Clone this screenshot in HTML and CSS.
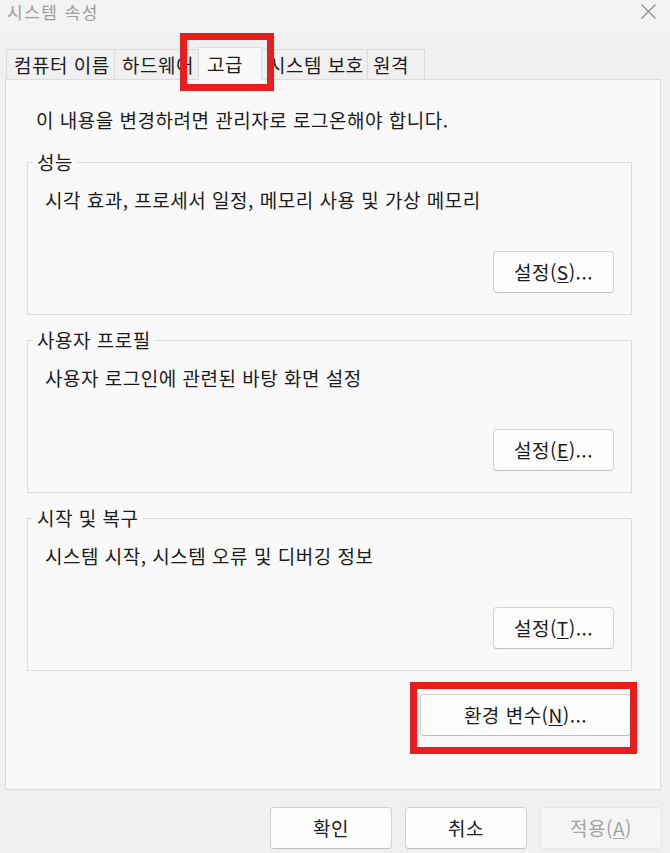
FILE: index.html
```html
<!DOCTYPE html>
<html lang="ko">
<head>
<meta charset="utf-8">
<title>시스템 속성</title>
<link rel="stylesheet" href="styles.css">
</head>
<body>
<div class="window">
  <div class="titlebar">
    <span class="title">시스템 속성</span>
    <svg class="close" width="15" height="15" viewBox="0 0 15 15"><path d="M0.5 0.5 L14.5 14.5 M14.5 0.5 L0.5 14.5" stroke="#8c8c8c" stroke-width="1.2" fill="none"/></svg>
  </div>
  <div class="tabs">
    <div class="tab t1">컴퓨터 이름</div>
    <div class="tab t2">하드웨어</div>
    <div class="tab t3 selected">고급</div>
    <div class="tab t4">시스템 보호</div>
    <div class="tab t5">원격</div>
  </div>
  <div class="panel">
    <p class="notice">이 내용을 변경하려면 관리자로 로그온해야 합니다.</p>
    <fieldset class="group">
      <legend>성능</legend>
      <p class="desc">시각 효과, 프로세서 일정, 메모리 사용 및 가상 메모리</p>
      <div class="row"><button class="btn small">설정(<u>S</u>)...</button></div>
    </fieldset>
    <fieldset class="group">
      <legend>사용자 프로필</legend>
      <p class="desc">사용자 로그인에 관련된 바탕 화면 설정</p>
      <div class="row"><button class="btn small">설정(<u>E</u>)...</button></div>
    </fieldset>
    <fieldset class="group">
      <legend>시작 및 복구</legend>
      <p class="desc">시스템 시작, 시스템 오류 및 디버깅 정보</p>
      <div class="row"><button class="btn small">설정(<u>T</u>)...</button></div>
    </fieldset>
    <div class="envrow"><button class="btn env">환경 변수(<u>N</u>)...</button></div>
  </div>
  <div class="footer">
    <button class="btn foot">확인</button>
    <button class="btn foot">취소</button>
    <button class="btn foot disabled">적용(<u>A</u>)</button>
  </div>
  <div class="mark mark-tab"></div>
  <div class="mark mark-env"></div>
</div>
</body>
</html>
```
FILE: styles.css
```css
html, body {
  margin: 0;
  padding: 0;
}
body {
  background: #f0f0f0;
  font-family: "Noto Sans CJK KR", "Noto Sans", sans-serif;
  font-size: 19px;
  letter-spacing: 0.5px;
  color: #1b1b1b;
}
.window {
  position: relative;
  width: 670px;
  height: 853px;
  overflow: hidden;
}
.titlebar {
  height: 33px;
  background: #f3f3f3;
  display: flex;
  justify-content: space-between;
  align-items: flex-start;
  padding: 0 14px 0 7px;
  box-sizing: border-box;
}
.title {
  font-size: 17px;
  letter-spacing: 1.5px;
  line-height: 24px;
  color: #9c9c9c;
}
.close {
  margin-top: 4px;
  display: block;
}
.tabs {
  display: flex;
  align-items: flex-end;
  height: 32px;
  margin-top: 14px;
  padding-left: 6px;
}
.tab {
  height: 30px;
  box-sizing: border-box;
  border: 1px solid #dcdcdc;
  border-bottom: none;
  margin-left: -1px;
  background: #f0f0f0;
  display: flex;
  align-items: center;
  padding-left: 7px;
  line-height: 24px;
  white-space: nowrap;
  overflow: hidden;
}
.t1 { margin-left: 0; width: 109px; }
.t2 { width: 85px; }
.t3 { width: 64px; padding-left: 8px; }
.t4 { width: 107px; padding-left: 6px; }
.t5 { width: 58px; padding-left: 5px; }
.tab.selected {
  height: 33px;
  margin-bottom: -1px;
  background: #f9f9f9;
  position: relative;
  z-index: 1;
}
.panel {
  margin-left: 5px;
  width: 656px;
  height: 711px;
  box-sizing: border-box;
  background: #f9f9f9;
  border: 1px solid #dcdcdc;
  padding: 28px 28px 0 21px;
}
.notice {
  margin: 0 0 18px 9px;
  line-height: 24px;
}
.group {
  margin: 0 0 13px 0;
  border: 1px solid #dcdcdc;
  padding: 14px 17px 21px 17px;
  min-width: 0;
}
.group legend {
  margin-left: -12px;
  padding: 0 4px;
  line-height: 24px;
}
.desc {
  margin: 0;
  line-height: 24px;
}
.row {
  display: flex;
  justify-content: flex-end;
  margin-top: 39px;
}
.btn {
  font-family: inherit;
  font-size: 19px;
  letter-spacing: 0.5px;
  color: #1b1b1b;
  background: #fdfdfd;
  border: 1px solid #d3d3d3;
  border-bottom-color: #bfbfbf;
  border-radius: 4px;
  padding: 0;
  line-height: 24px;
  box-sizing: border-box;
}
.btn u {
  text-underline-offset: 2px;
  text-decoration-thickness: 1px;
}
.small {
  width: 121px;
  height: 42px;
}
.envrow {
  display: flex;
  justify-content: flex-end;
  margin-top: 23px;
  padding-right: 1px;
}
.env {
  width: 211px;
  height: 42px;
}
.footer {
  display: flex;
  justify-content: flex-end;
  gap: 13px;
  margin-top: 17px;
  padding-right: 8px;
}
.foot {
  width: 122px;
  height: 42px;
}
.foot.disabled {
  color: #a3a3a3;
  background: #f5f5f5;
  border-color: #e5e5e5;
}
.mark {
  position: absolute;
  border: 7px solid #e61e1e;
  box-sizing: border-box;
  pointer-events: none;
  z-index: 5;
}
.mark-tab {
  left: 180px;
  top: 33px;
  width: 94px;
  height: 58px;
}
.mark-env {
  left: 410px;
  top: 682px;
  width: 227px;
  height: 72px;
}
```
